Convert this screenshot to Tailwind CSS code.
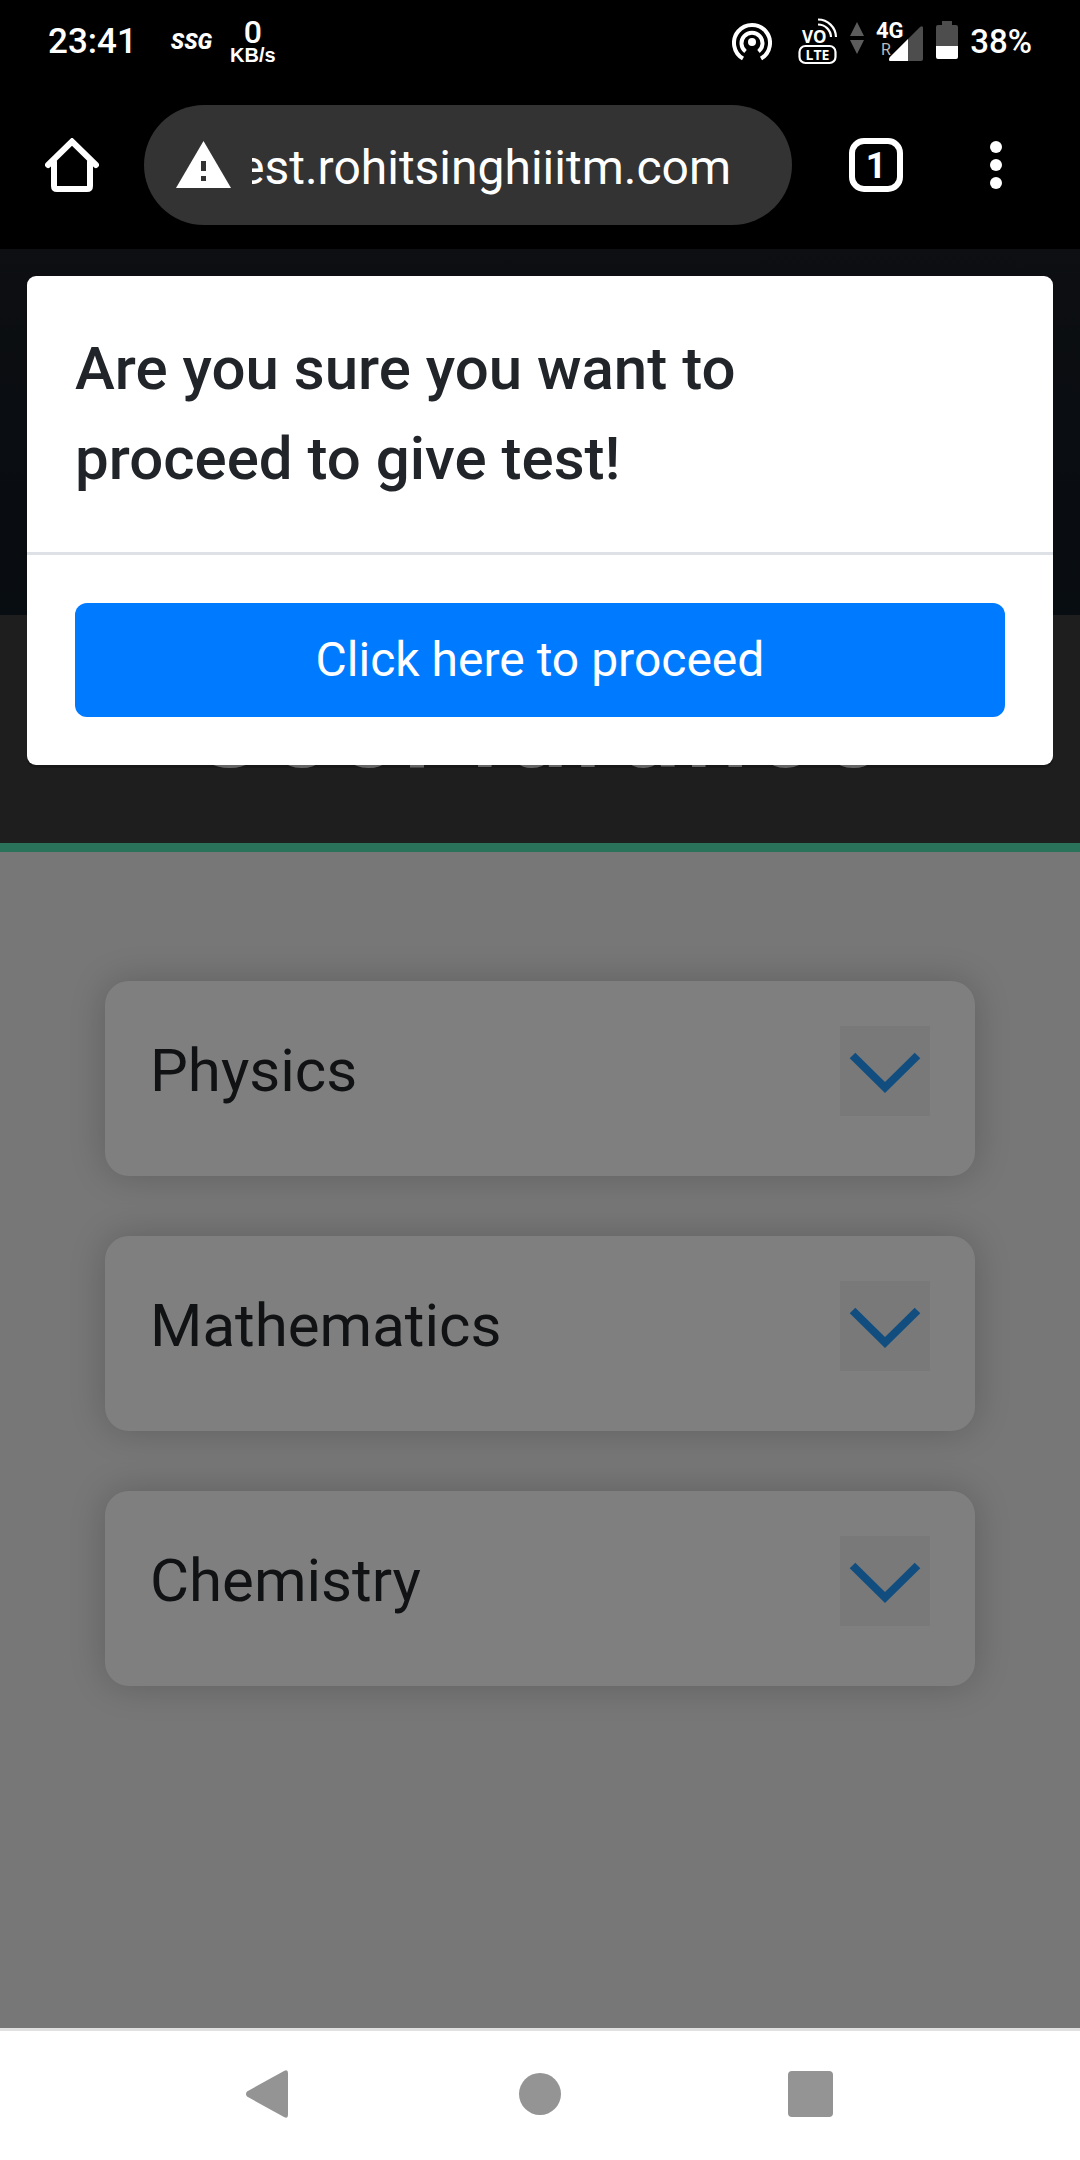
<!DOCTYPE html>
<html lang="en">
<head>
<meta charset="utf-8">
<meta name="viewport" content="width=device-width, initial-scale=1">
<title>Proceed to test</title>
<script src="https://cdn.jsdelivr.net/npm/@tailwindcss/browser@4"></script>
</head>
<body class="flex min-h-screen flex-col bg-black font-[Roboto,sans-serif] text-[#212529]">

<!-- Status bar -->
<div class="flex h-[84px] items-center justify-between px-12 text-white">
  <div class="flex items-center gap-[34px]">
    <span class="text-[35px] leading-[40px] font-medium">23:41</span>
    <span class="text-[22px] leading-[28px] font-black italic">SSG</span>
    <span class="-ml-4 flex flex-col items-center">
      <span class="text-[32px] leading-[26px] font-medium">0</span>
      <span class="font-['Liberation_Sans',sans-serif] text-[20px] leading-[20px] font-bold">KB/s</span>
    </span>
  </div>
  <div class="flex items-center gap-3">
    <svg class="mr-[14px] h-10 w-10" viewBox="0 0 40 40" fill="none" stroke="#fff" stroke-width="4" aria-label="Hotspot">
      <path d="M11 36.500A18 18 0 1 1 29 36.500"/>
      <path d="M13.500 29.500A10.500 10.500 0 1 1 26.500 29.500"/>
      <circle cx="20" cy="20" r="4" fill="#fff" stroke="none"/>
    </svg>
    <svg class="mb-[3px] h-12 w-10" viewBox="0 0 40 48" fill="none" aria-label="VoLTE">
      <rect x="1.500" y="29" width="36" height="17" rx="6" stroke="#fff" stroke-width="2.200"/>
      <text x="19.500" y="43" text-anchor="middle" fill="#fff" font-family="Open Sans" font-weight="700" font-size="14">LTE</text>
      <text x="4" y="26" fill="#fff" font-family="Open Sans" font-weight="700" font-size="17">VO</text>
      <path d="M20 2.500A18 18 0 0 1 38 20M20 7.500A13 13 0 0 1 33 20" stroke="#fff" stroke-width="2.200"/>
    </svg>
    <svg class="mb-[9px] h-8 w-[14px]" viewBox="0 0 14 32" fill="#5c5c5c" aria-label="Data activity"><path d="M7 0L14 14H0ZM0 18H14L7 32Z"/></svg>
    <svg class="mb-[3px] h-[42px] w-12" viewBox="0 0 48 42" aria-label="Signal">
      <path d="M13 41V38L44 7Q47 5 47 8V39Q47 41 45 41Z" fill="#4d4d4d"/>
      <path d="M32 19V41H14Q12 40 14 37Z" fill="#fff"/>
      <text x="0" y="18" fill="#fff" font-family="Roboto" font-weight="700" font-size="22">4G</text>
      <text x="5" y="35" fill="#bbb" font-family="Roboto" font-size="16">R</text>
    </svg>
    <svg class="mb-1 h-[38px] w-[22px]" viewBox="0 0 22 38" aria-label="Battery">
      <path d="M6 0H16V4H20Q22 4 22 6V25H0V6Q0 4 2 4H6Z" fill="#4d4d4d"/>
      <path d="M0 25H22V36Q22 38 20 38H2Q0 38 0 36Z" fill="#fff"/>
    </svg>
    <span class="text-[33px] leading-[40px] font-medium">38%</span>
  </div>
</div>

<!-- Browser toolbar -->
<header class="flex items-center bg-black pt-[21px] pr-[78px] pb-6 pl-[45px] text-white">
  <button type="button" aria-label="Home" class="mr-[45px] shrink-0">
    <svg class="h-[54px] w-[54px]" viewBox="0 0 54 54" fill="none" stroke="#fff" stroke-width="6" stroke-linecap="round" stroke-linejoin="round">
      <path d="M3 27L27 3.500L51 27" stroke-linejoin="miter"/><path d="M9 24V48Q9 51 12 51H42Q45 51 45 48V24"/>
    </svg>
  </button>
  <div class="flex h-[120px] min-w-0 flex-1 items-center rounded-full bg-[#333] pr-[61px] pl-8">
    <svg class="mr-[21px] h-12 w-[55px] shrink-0" viewBox="0 0 55 48" aria-label="Not secure"><path d="M27.500 0L55 47H0Z" fill="#fff"/><path d="M25 20H30V30H25ZM25 35H30V40H25Z" fill="#333"/></svg>
    <input type="text" dir="rtl" aria-label="Address" value="test.rohitsinghiiitm.com" class="h-[64px] w-full min-w-0 bg-transparent pt-1 text-[48px] leading-[60px] outline-none">
  </div>
  <button type="button" aria-label="Tabs" class="ml-[57px] flex h-[54px] w-[54px] shrink-0 items-center justify-center rounded-[15px] border-[6px] border-white pt-[2px] text-[36px] leading-[40px] font-bold">1</button>
  <button type="button" aria-label="Menu" class="ml-[87px] flex shrink-0 flex-col gap-[6px]">
    <span class="h-3 w-3 rounded-full bg-white"></span><span class="h-3 w-3 rounded-full bg-white"></span><span class="h-3 w-3 rounded-full bg-white"></span>
  </button>
</header>

<!-- Web page -->
<div class="relative flex flex-1 flex-col bg-[#eee]">
  <div class="h-[366px] bg-linear-to-b from-[#1a1e24] via-[#141a22] to-[#111a22]"></div>
  <div class="h-[237px] border-b-9 border-[#54e5b5] bg-[#3c3c3c] pt-[45px] text-center">
    <h1 class="text-[114px] leading-[136px] font-medium tracking-wider text-white">SeeFlurance</h1>
  </div>
  <main class="flex flex-col gap-[60px] px-[105px] pt-[129px]">
    <section class="flex items-center justify-between rounded-3xl bg-white px-[45px] pt-[45px] pb-[60px] shadow-[0_0_36px_rgba(0,0,0,0.2)]">
      <h2 class="text-[60px] leading-[90px]">Physics</h2>
      <button type="button" aria-label="Expand Physics" class="bg-[#f2f2f2]"><svg class="h-[90px] w-[90px]" viewBox="0 0 90 90" fill="none" stroke="#229dff" stroke-width="8"><path d="M12.500 29.500L45 61.500L77.500 29.500"/></svg></button>
    </section>
    <section class="flex items-center justify-between rounded-3xl bg-white px-[45px] pt-[45px] pb-[60px] shadow-[0_0_36px_rgba(0,0,0,0.2)]">
      <h2 class="text-[60px] leading-[90px]">Mathematics</h2>
      <button type="button" aria-label="Expand Mathematics" class="bg-[#f2f2f2]"><svg class="h-[90px] w-[90px]" viewBox="0 0 90 90" fill="none" stroke="#229dff" stroke-width="8"><path d="M12.500 29.500L45 61.500L77.500 29.500"/></svg></button>
    </section>
    <section class="flex items-center justify-between rounded-3xl bg-white px-[45px] pt-[45px] pb-[60px] shadow-[0_0_36px_rgba(0,0,0,0.2)]">
      <h2 class="text-[60px] leading-[90px]">Chemistry</h2>
      <button type="button" aria-label="Expand Chemistry" class="bg-[#f2f2f2]"><svg class="h-[90px] w-[90px]" viewBox="0 0 90 90" fill="none" stroke="#229dff" stroke-width="8"><path d="M12.500 29.500L45 61.500L77.500 29.500"/></svg></button>
    </section>
  </main>

  <!-- Confirmation dialog over the dimmed page -->
  <div class="absolute inset-0 bg-black/50 p-[27px]">
    <div role="dialog" aria-labelledby="confirm-title" class="rounded-[9px] bg-white shadow-[0_3px_0_rgba(0,0,0,0.2)]">
      <div class="border-b-3 border-[#dee2e6] p-12 pr-[240px]">
        <h2 id="confirm-title" class="text-[60px] leading-[90px] font-medium">Are you sure you want to proceed to give test!</h2>
      </div>
      <div class="p-12">
        <button type="button" class="h-[114px] w-full rounded-xl bg-[#007bff] text-[48px] leading-[72px] text-white">Click here to proceed</button>
      </div>
    </div>
  </div>
</div>

<!-- System navigation -->
<nav class="grid h-[132px] grid-cols-3 items-center border-t-3 border-[#e0e0e0] bg-white px-[135px] pb-[3px]">
  <button type="button" aria-label="Back" class="flex justify-center"><svg class="h-12 w-12" viewBox="0 0 48 48"><path d="M1 21.500L38 1Q42 -1 42 3V45Q42 49 38 47L1 26.500Q-1 24 1 21.500Z" fill="#949494"/></svg></button>
  <button type="button" aria-label="Home screen" class="flex justify-center"><span class="h-[42px] w-[42px] rounded-full bg-[#949494]"></span></button>
  <button type="button" aria-label="Recent apps" class="flex justify-center"><span class="h-[46px] w-[45px] rounded-[4px] bg-[#949494]"></span></button>
</nav>
</body>
</html>
